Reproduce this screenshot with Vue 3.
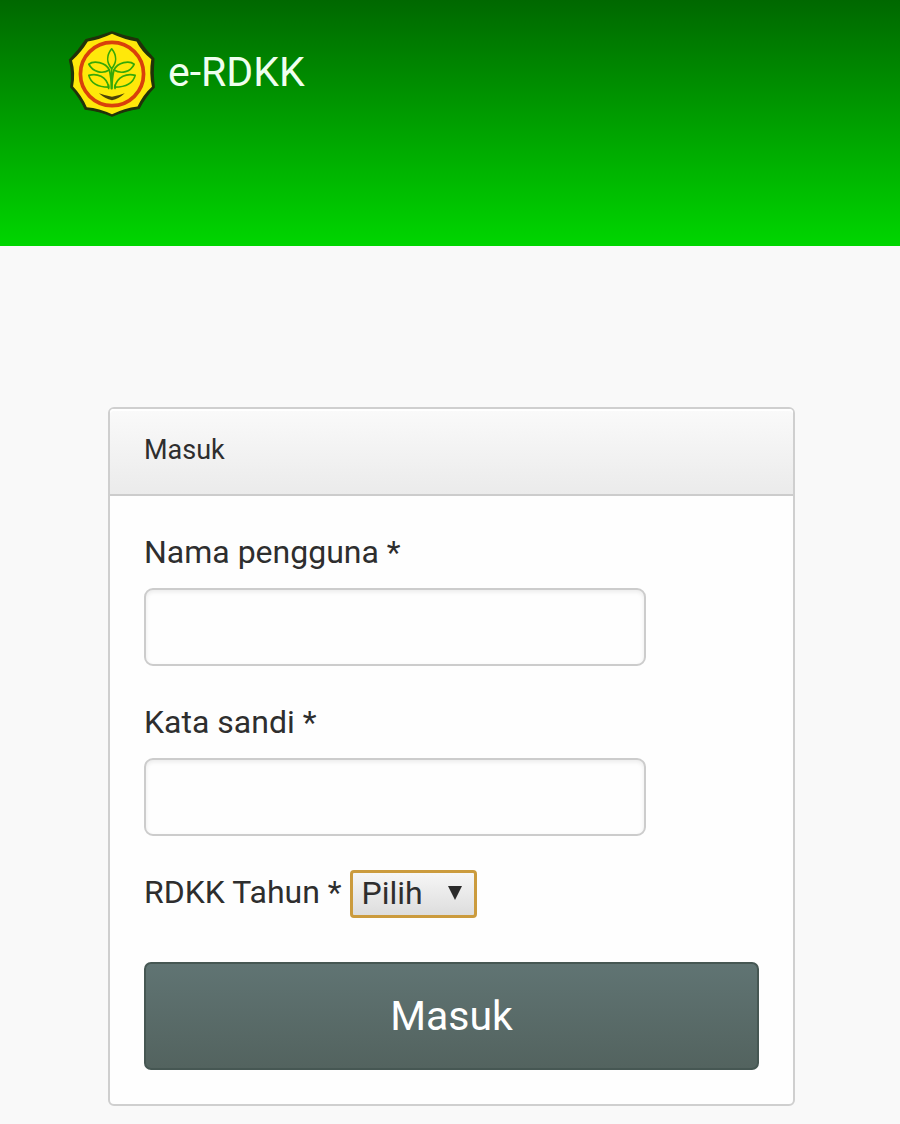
<template>
  <div class="page">
    <header class="navbar">
      <a href="#" class="brand">
        <svg class="logo" viewBox="26 34 262 258" aria-hidden="true">
          <path
            d="M157 37 Q196 51 235 59 Q255 90 282 117 Q277 160 283 203 Q257 229 238 266 Q194 273 157 289 Q119 273 77 268 Q61 232 34 202 Q40 160 30 121 Q58 92 79 60 Q119 51 157 37 Z"
            fill="#20320a"
            stroke="#20320a"
            stroke-width="3"
            stroke-linejoin="round"
          />
          <path
            d="M157 43 Q193 60 230 66 Q245 96 274 119 Q267 160 276 201 Q250 224 233 260 Q194 265 157 283 Q119 265 82 262 Q67 227 41 200 Q49 160 38 123 Q66 97 85 66 Q122 60 157 43 Z"
            fill="#ffe80a"
          />
          <circle cx="157" cy="163" r="94" fill="none" stroke="#d9400b" stroke-width="11" />
          <g fill="none" stroke="#35a808" stroke-width="5" stroke-linecap="round" stroke-linejoin="round">
            <path d="M156 88 C140 108 141 130 156 147 C171 130 172 108 156 88 Z" />
            <path d="M88 134 C102 122 138 127 149 151 C127 165 100 156 88 134 Z" />
            <path d="M223 134 C209 122 174 127 163 151 C185 165 212 156 223 134 Z" />
            <path d="M88 167 C112 160 141 170 147 202 C116 202 94 190 88 167 Z" />
            <path d="M226 167 C202 160 173 170 165 202 C198 202 220 190 226 167 Z" />
            <path d="M156 147 V207 M149 151 Q155 174 155 206 M163 151 Q157 174 157 206 M147 196 V206 M166 196 V206" />
          </g>
          <path d="M118 220 Q138 227 157 231 Q176 227 195 220 Q178 236 157 241 Q136 236 118 220 Z" fill="#4c4308" />
        </svg>
        <span>e-RDKK</span>
      </a>
    </header>

    <main class="panel">
      <h1 class="panel-heading">Masuk</h1>
      <form class="panel-body" @submit.prevent>
        <div class="form-group">
          <label for="username">Nama pengguna *</label>
          <input id="username" v-model="form.username" type="text" autocomplete="username" />
        </div>
        <div class="form-group">
          <label for="password">Kata sandi *</label>
          <input id="password" v-model="form.password" type="password" autocomplete="current-password" />
        </div>
        <div class="form-inline">
          <label for="tahun">RDKK Tahun *</label>
          <div class="select-wrap">
            <select id="tahun" v-model="form.tahun">
              <option value="">Pilih</option>
            </select>
            <svg class="caret" viewBox="0 0 14 14" aria-hidden="true">
              <path d="M0 0 H14 L7 14 Z" fill="#2b2b2b" />
            </svg>
          </div>
        </div>
        <button type="submit" class="btn">Masuk</button>
      </form>
    </main>
  </div>
</template>

<script setup>
import { reactive } from 'vue'

const form = reactive({
  username: '',
  password: '',
  tahun: ''
})
</script>

<style>
body { margin: 0; background: #f9f9f9; }
</style>

<style scoped>
.page {
  font-family: Roboto, "Liberation Sans", sans-serif;
  color: #2e2e2e;
  padding-bottom: 18px;
}
.page * { box-sizing: border-box; }

.navbar {
  height: 246px;
  padding: 30px 68px;
  background: linear-gradient(#006800, #00d600);
}
.brand {
  display: inline-flex; align-items: center; gap: 12px;
  color: #efffef; font-size: 41px; line-height: 48px; text-decoration: none;
}
.brand span { margin-bottom: 4px; }
.logo { width: 88px; height: 88px; }

.panel {
  margin: 161px 105px 0 108px;
  background: #fefefe;
  border: 2px solid #cfcfcf;
  border-radius: 6px;
}
.panel-heading {
  margin: 0; padding: 21px 34px 24px;
  font-size: 27px; font-weight: 400; line-height: 40px;
  background: linear-gradient(#fafafa, #ebebeb);
  border-bottom: 2px solid #cccccc;
  border-radius: 4px 4px 0 0;
  box-shadow: inset 0 2px 0 #ffffff;
}
.panel-body { padding: 34px; }

label { font-size: 32px; line-height: 44px; }
.form-group {
  display: flex; flex-direction: column; gap: 14px;
  margin-bottom: 34px;
}
.form-group input {
  width: 100%; max-width: 502px; height: 78px;
  padding: 8px 16px;
  font: inherit; font-size: 32px; color: inherit;
  background: #fefefe;
  border: 2px solid #cccccc; border-radius: 9px;
  box-shadow: inset 0 2px 4px rgba(0, 0, 0, 0.08);
}

.form-inline { display: flex; align-items: flex-start; gap: 8px; margin-bottom: 44px; }
.select-wrap { position: relative; }
.select-wrap select {
  display: block; width: 127px; height: 48px;
  padding: 0 36px 6px 9px;
  appearance: none;
  font: inherit; font-size: 32px; line-height: 40px; color: inherit;
  background: linear-gradient(#f6f6f6, #dddddd);
  border: 3px solid #cb9b3d; border-radius: 4px;
}
.caret {
  position: absolute; right: 15px; top: 16px;
  width: 14px; height: 14px;
  pointer-events: none;
}

.btn {
  display: block; width: 100%; height: 108px;
  font: inherit; font-size: 41px; line-height: 48px; color: #ffffff;
  background: linear-gradient(#607473, #53635f);
  border: 2px solid #465753; border-radius: 7px;
}
</style>
